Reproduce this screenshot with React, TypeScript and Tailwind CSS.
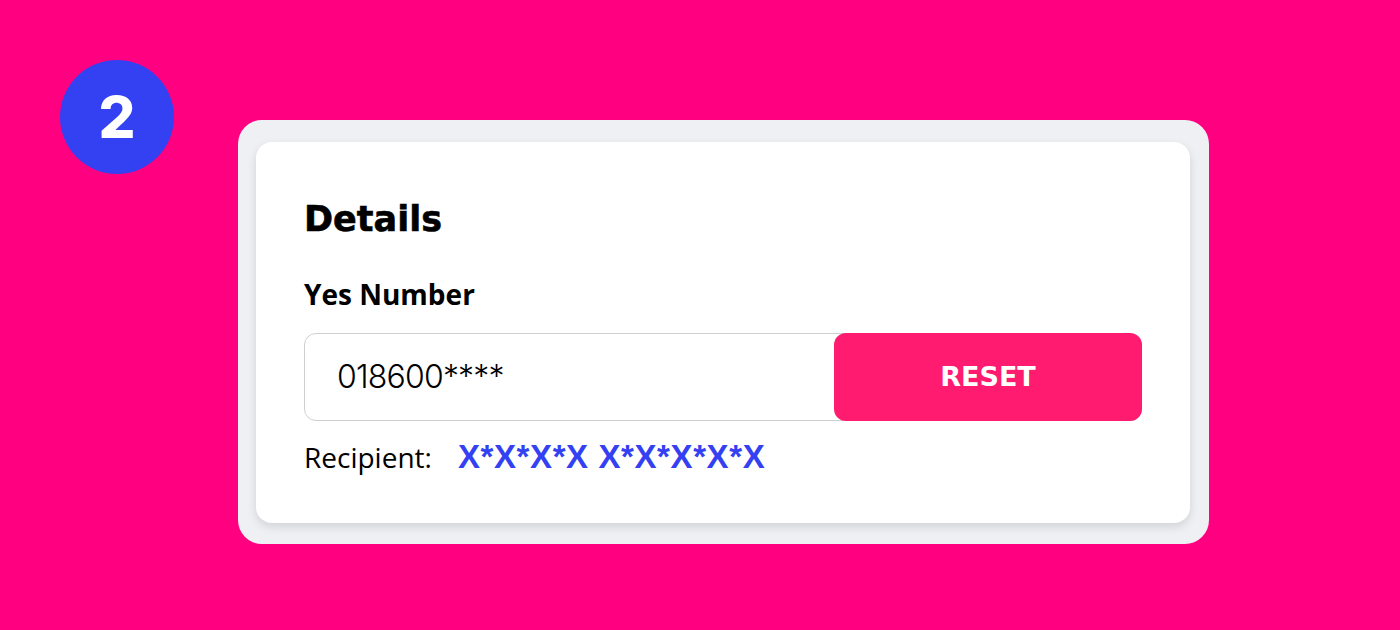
export default function App() {
  return (
    <div className="w-[1400px] h-[630px] bg-[#ff0080] flex items-start pt-[60px] pl-[60px]">
      <div className="w-[114px] h-[114px] rounded-full bg-[#3341f2] flex items-center justify-center shrink-0">
        <span className="text-white text-[58px] font-extrabold leading-none font-['Inter',sans-serif]">2</span>
      </div>
      <div className="ml-[64px] mt-[60px] w-[971px] rounded-[24px] bg-[#eef0f4] pl-[18px] pr-[19px] pt-[22px] pb-[21px]">
        <div className="rounded-[16px] bg-white shadow-[0_4px_10px_rgba(0,0,0,0.12)] pl-[48px] pr-[48px] pt-[60px] pb-[50px]">
          <h2 className="text-[35px] font-bold text-black leading-none [-webkit-text-stroke:0.6px_black] font-['DejaVu_Sans',sans-serif]">Details</h2>
          <div className="mt-[43px] text-[28px] font-bold text-black leading-none font-['Open_Sans',sans-serif]">Yes Number</div>
          <div className="mt-[25px] flex h-[88px] rounded-[12px] border border-[#cfcfcf] bg-white">
            <div className="flex-1 flex items-center pl-[32px] text-[32px] tracking-[-0.8px] text-black font-['Inter',sans-serif] font-light">018600****</div>
            <button className="w-[308px] -my-px -mr-px rounded-[12px] bg-[#ff1b70] text-white text-[27px] font-bold font-['DejaVu_Sans',sans-serif]">RESET</button>
          </div>
          <div className="mt-[19px] flex items-baseline">
            <span className="text-[28px] leading-none text-black font-['Open_Sans',sans-serif]">Recipient:</span>
            <span className="ml-[26px] text-[33px] leading-none tracking-[0.6px] font-bold text-[#3341f2] font-['Liberation_Sans',sans-serif]">X*X*X*X X*X*X*X*X</span>
          </div>
        </div>
      </div>
    </div>
  )
}
